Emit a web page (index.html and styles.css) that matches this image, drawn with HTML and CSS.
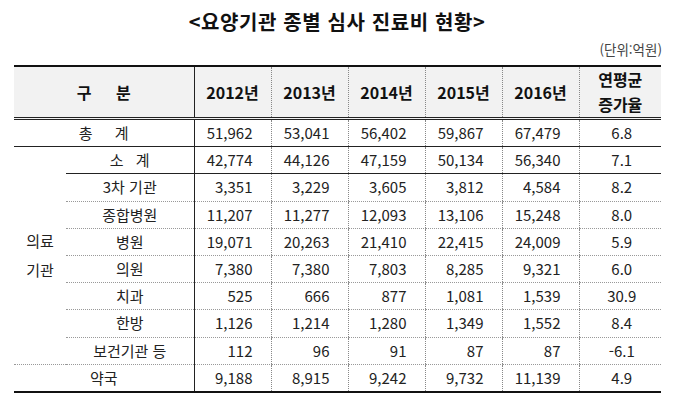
FILE: index.html
```html
<!DOCTYPE html>
<html lang="ko">
<head>
<meta charset="utf-8">
<link rel="stylesheet" href="styles.css">
</head>
<body>
<div class="page">
  <h1 class="title">&lt;요양기관 종별 심사 진료비 현황&gt;</h1>
  <div class="unit">(단위:억원)</div>
  <table class="stats">
    <colgroup>
      <col class="c-grp"><col class="c-lbl"><col class="c-num"><col class="c-num"><col class="c-num"><col class="c-num"><col class="c-num"><col class="c-rate">
    </colgroup>
    <thead>
      <tr>
        <th colspan="2" class="lbl-head"><span class="wide">구 분</span></th>
        <th>2012년</th><th>2013년</th><th>2014년</th><th>2015년</th><th>2016년</th>
        <th class="rate-head">연평균<br>증가율</th>
      </tr>
    </thead>
    <tbody>
      <tr class="solid-b">
        <td colspan="2" class="lbl"><span class="sp-total">총 계</span></td>
        <td>51,962</td><td>53,041</td><td>56,402</td><td>59,867</td><td>67,479</td><td class="rate">6.8</td>
      </tr>
      <tr class="solid-b">
        <td rowspan="8" class="grp">의료<br>기관</td>
        <td class="lbl"><span class="sp-sub">소 계</span></td>
        <td>42,774</td><td>44,126</td><td>47,159</td><td>50,134</td><td>56,340</td><td class="rate">7.1</td>
      </tr>
      <tr>
        <td class="lbl">3차 기관</td>
        <td>3,351</td><td>3,229</td><td>3,605</td><td>3,812</td><td>4,584</td><td class="rate">8.2</td>
      </tr>
      <tr>
        <td class="lbl">종합병원</td>
        <td>11,207</td><td>11,277</td><td>12,093</td><td>13,106</td><td>15,248</td><td class="rate">8.0</td>
      </tr>
      <tr>
        <td class="lbl">병원</td>
        <td>19,071</td><td>20,263</td><td>21,410</td><td>22,415</td><td>24,009</td><td class="rate">5.9</td>
      </tr>
      <tr>
        <td class="lbl">의원</td>
        <td>7,380</td><td>7,380</td><td>7,803</td><td>8,285</td><td>9,321</td><td class="rate">6.0</td>
      </tr>
      <tr>
        <td class="lbl">치과</td>
        <td>525</td><td>666</td><td>877</td><td>1,081</td><td>1,539</td><td class="rate">30.9</td>
      </tr>
      <tr>
        <td class="lbl">한방</td>
        <td>1,126</td><td>1,214</td><td>1,280</td><td>1,349</td><td>1,552</td><td class="rate">8.4</td>
      </tr>
      <tr class="dot-full">
        <td class="lbl">보건기관 등</td>
        <td>112</td><td>96</td><td>91</td><td>87</td><td>87</td><td class="rate">-6.1</td>
      </tr>
      <tr class="last">
        <td colspan="2" class="lbl">약국</td>
        <td>9,188</td><td>8,915</td><td>9,242</td><td>9,732</td><td>11,139</td><td class="rate">4.9</td>
      </tr>
    </tbody>
  </table>
</div>
</body>
</html>
```

FILE: styles.css
```css
html, body {
  margin: 0;
  padding: 0;
  background: #ffffff;
}

.page {
  width: 646px;
  padding: 0 20px 0 14px;
  font-family: "Noto Sans CJK KR", "Noto Sans", sans-serif;
  color: #222;
}

.title {
  margin: 10px 0 0 0;
  font-size: 20px;
  line-height: 24px;
  font-weight: 700;
  text-align: center;
  color: #111;
  letter-spacing: 0.6px;
}

.unit {
  margin: 7px -2px 0 0;
  font-size: 13.5px;
  line-height: 16px;
  text-align: right;
  color: #444;
}

.stats {
  margin-top: 8px;
  width: 646px;
  border-collapse: collapse;
  table-layout: fixed;
  font-size: 15px;
}

.c-grp { width: 52px; }
.c-lbl { width: 128px; }
.c-num { width: 77px; }
.c-rate { width: 82px; }

.stats thead tr {
  background: #f2f2f2;
  border-top: 2px solid #111;
  border-bottom: 3px double #222;
}

.stats th {
  height: 48px;
  padding: 0;
  font-size: 16px;
  font-weight: 700;
  color: #111;
  text-align: center;
  vertical-align: middle;
  border-left: 1px dotted #888;
}

.stats th.lbl-head {
  border-left: none;
  border-right: 1px solid #222;
}

.stats th.rate-head {
  line-height: 25px;
}

.wide {
  word-spacing: 20px;
}

.stats td {
  height: 26.2px;
  padding: 0 18px 0 0;
  text-align: right;
  vertical-align: middle;
  color: #222;
  line-height: 18px;
  border-left: 1px dotted #888;
  border-bottom: 1px dotted #999;
}

.stats td.lbl {
  text-align: center;
  padding: 0;
  border-left: none;
  border-right: 1px solid #222;
}

.stats td.grp {
  text-align: center;
  padding: 0;
  border-left: none;
  border-bottom: 1px dotted #999;
  line-height: 29px;
}

.stats td.rate {
  text-align: center;
  padding: 0 0 0 3px;
}

.stats tr.solid-b td {
  border-bottom: 1px solid #222;
}

.stats tr.solid-b td.grp {
  border-bottom: 1px dotted #999;
}

.stats tr.last td {
  border-bottom: 2px solid #111;
}

.sp-total {
  word-spacing: 18px;
}

.sp-sub {
  word-spacing: 8px;
}
```
